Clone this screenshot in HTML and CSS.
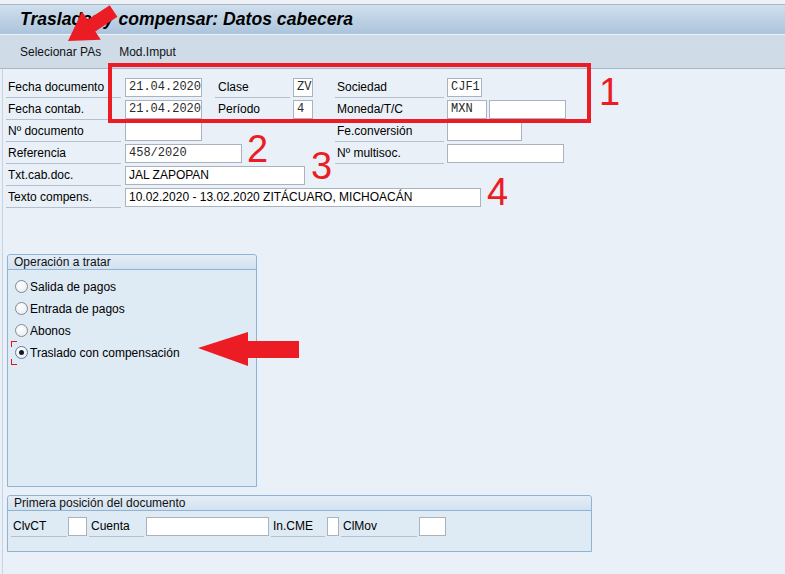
FILE: index.html
```html
<!DOCTYPE html>
<html lang="es">
<head>
<meta charset="utf-8">
<title>Trasladar y compensar: Datos cabecera</title>
<link rel="stylesheet" href="styles.css">
</head>
<body>
<header class="titlebar"><h1>Trasladar y compensar: Datos cabecera</h1></header>
<nav class="toolbar"><span>Selecionar PAs</span><span>Mod.Imput</span></nav>
<main class="content">
  <div class="form">
    <div class="frow">
      <span class="lbl">Fecha documento</span><span class="in mono w77">21.04.2020</span>
      <span class="lbl lbl3">Clase</span><span class="in mono w20">ZV</span>
      <span class="lbl lbl5">Sociedad</span><span class="in mono w35">CJF1</span>
    </div>
    <div class="frow">
      <span class="lbl">Fecha contab.</span><span class="in mono w77">21.04.2020</span>
      <span class="lbl lbl3">Período</span><span class="in mono w20">4</span>
      <span class="lbl lbl5">Moneda/T/C</span><span class="pair"><span class="in mono w40">MXN</span><span class="in w77"></span></span>
    </div>
    <div class="frow">
      <span class="lbl">Nº documento</span><span class="in w77"></span>
      <span class="lbl lbl5 at5">Fe.conversión</span><span class="in w75"></span>
    </div>
    <div class="frow">
      <span class="lbl">Referencia</span><span class="in mono w117 span3">458/2020</span>
      <span class="lbl lbl5 at5">Nº multisoc.</span><span class="in w117"></span>
    </div>
    <div class="frow">
      <span class="lbl">Txt.cab.doc.</span><span class="in w180 spanall">JAL ZAPOPAN</span>
    </div>
    <div class="frow">
      <span class="lbl">Texto compens.</span><span class="in w356 spanall">10.02.2020 - 13.02.2020 ZITÁCUARO, MICHOACÁN</span>
    </div>
  </div>

  <section class="group op">
    <div class="ghead">Operación a tratar</div>
    <div class="gbody">
      <div class="radio"><span class="dot"></span>Salida de pagos</div>
      <div class="radio"><span class="dot"></span>Entrada de pagos</div>
      <div class="radio"><span class="dot"></span>Abonos</div>
      <div class="radio sel focus"><span class="dot"></span>Traslado con compensación</div>
    </div>
  </section>

  <section class="group pos">
    <div class="ghead">Primera posición del documento</div>
    <div class="gbody posrow">
      <span class="lbl s1">ClvCT</span><span class="in w19"></span>
      <span class="lbl s2">Cuenta</span><span class="in w123"></span>
      <span class="lbl s3">In.CME</span><span class="in w12"></span>
      <span class="lbl s4">ClMov</span><span class="in w27"></span>
    </div>
  </section>
</main>

<div class="mark-box"></div>
<span class="num n1">1</span>
<span class="num n2">2</span>
<span class="num n3">3</span>
<span class="num n4">4</span>
<svg class="arrows" width="785" height="574" viewBox="0 0 785 574">
  <polygon fill="#ec1c24" points="68,41 82,11.4 87.6,19.8 109.7,5.2 117.4,16.8 95.3,31.4 100.8,39.8"/>
  <polygon fill="#ec1c24" points="198,348 248,332 248,341 299,341 299,358 248,358 248,366"/>
</svg>
</body>
</html>
```
FILE: styles.css
```css
* { box-sizing: border-box; }
html, body { margin: 0; padding: 0; }
body {
  width: 785px;
  height: 574px;
  overflow: hidden;
  position: relative;
  background: #e9f0f7;
  font-family: "Liberation Sans", Arial, sans-serif;
  font-size: 12px;
  color: #000;
}

.titlebar {
  height: 35px;
  border-top: 4px solid #eef1f5;
  border-bottom: 1px solid #eef3f8;
  box-shadow: inset 0 1px 0 #a9b9ca;
  background: linear-gradient(to bottom, #d2e0ed, #abc4dc);
  display: flex;
  align-items: center;
  padding-left: 20px;
}
.titlebar h1 {
  margin: 0;
  font-size: 17.6px;
  font-style: italic;
  font-weight: bold;
  color: #000;
}

.toolbar {
  height: 34px;
  background: #cfdce8;
  border-bottom: 1px solid #a7b8ca;
  display: flex;
  align-items: center;
  gap: 18px;
  padding-left: 20px;
  padding-top: 1px;
  color: #111;
}

.content {
  margin-left: 2px;
  border-left: 1px solid #c8d4e0;
  height: 505px;
  padding-top: 7px;
}

.form { padding-left: 3px; }
.frow {
  display: grid;
  grid-template-columns: 119px 90px 78px 41px 113px 1fr;
  height: 22px;
  align-items: center;
}
.lbl {
  height: 22px;
  display: flex;
  align-items: center;
  padding-left: 2px;
  padding-top: 1px;
  border-bottom: 1px solid #b4c0cd;
  width: 115px;
  white-space: nowrap;
}
.lbl3 { width: 75px; padding-left: 3px; }
.lbl5 { width: 109px; margin-left: 1px; padding-left: 2px; }
.at5 { grid-column: 5; }
.span3 { grid-column: 2 / 5; }
.spanall { grid-column: 2 / 7; }

.in {
  display: block;
  height: 19px;
  background: #fff;
  border: 1px solid #aab3bd;
  padding: 0 3px;
  line-height: 17px;
  white-space: nowrap;
  overflow: hidden;
}
.mono {
  font-family: "Liberation Mono", "Courier New", monospace;
  font-size: 12px;
  color: #2a2a2a;
}
.pair { display: flex; gap: 2px; }
.w12 { width: 12px; }
.w19 { width: 19px; }
.w20 { width: 20px; }
.w27 { width: 27px; }
.w35 { width: 35px; }
.w40 { width: 40px; }
.w75 { width: 75px; }
.w77 { width: 77px; }
.w117 { width: 117px; }
.w123 { width: 123px; }
.w180 { width: 180px; }
.w356 { width: 356px; }

.group {
  margin-left: 4px;
  border: 1px solid #8fb3d5;
  border-radius: 3px 3px 0 0;
  background: #deeaf4;
}
.ghead {
  height: 15px;
  border-bottom: 1px solid #8fb3d5;
  background: linear-gradient(to bottom, #e3edf6, #d3e2f0);
  padding-left: 6px;
  line-height: 14px;
  color: #111;
  border-radius: 3px 3px 0 0;
}
.op {
  margin-top: 46px;
  width: 250px;
  height: 233px;
}
.op .gbody { padding: 5px 0 0 7px; }
.radio {
  position: relative;
  height: 22px;
  display: flex;
  align-items: center;
  gap: 2px;
  padding-top: 1px;
}
.dot {
  width: 13px;
  height: 13px;
  border-radius: 50%;
  border: 1px solid #7f8a96;
  background: radial-gradient(circle at 40% 35%, #ffffff, #e4e9ee);
  display: flex;
  align-items: center;
  justify-content: center;
}
.sel .dot { border-color: #5b7fa8; }
.sel .dot::after {
  content: "";
  width: 5px;
  height: 5px;
  border-radius: 50%;
  background: #1a1a1a;
}
.focus::before, .focus::after {
  content: "";
  position: absolute;
  left: -4px;
  width: 5px;
  height: 5px;
  border-left: 1px solid #e0141c;
}
.focus::before { top: 0; border-top: 1px solid #e0141c; }
.focus::after { bottom: -2px; border-bottom: 1px solid #e0141c; }

.pos {
  margin-top: 8px;
  width: 585px;
  height: 57px;
}
.posrow {
  display: flex;
  align-items: center;
  gap: 2px;
  padding: 4px 0 0 3px;
  height: 26px;
}
.posrow .lbl { width: auto; }
.posrow .s1 { width: 56px; margin-right: -1px; }
.posrow .s2 { width: 55px; }
.posrow .s3 { width: 54px; }
.posrow .s4 { width: 76px; }

.mark-box {
  position: absolute;
  left: 108px;
  top: 63px;
  width: 483px;
  height: 60px;
  border: 4px solid #ec1c24;
}
.num {
  position: absolute;
  font-family: "Liberation Sans", Arial, sans-serif;
  font-size: 38px;
  line-height: 38px;
  color: #ec1c24;
}
.n1 { left: 599px; top: 73px; }
.n2 { left: 247px; top: 130px; }
.n3 { left: 311px; top: 147px; }
.n4 { left: 487px; top: 173px; }
.arrows {
  position: absolute;
  left: 0;
  top: 0;
  pointer-events: none;
}
```
